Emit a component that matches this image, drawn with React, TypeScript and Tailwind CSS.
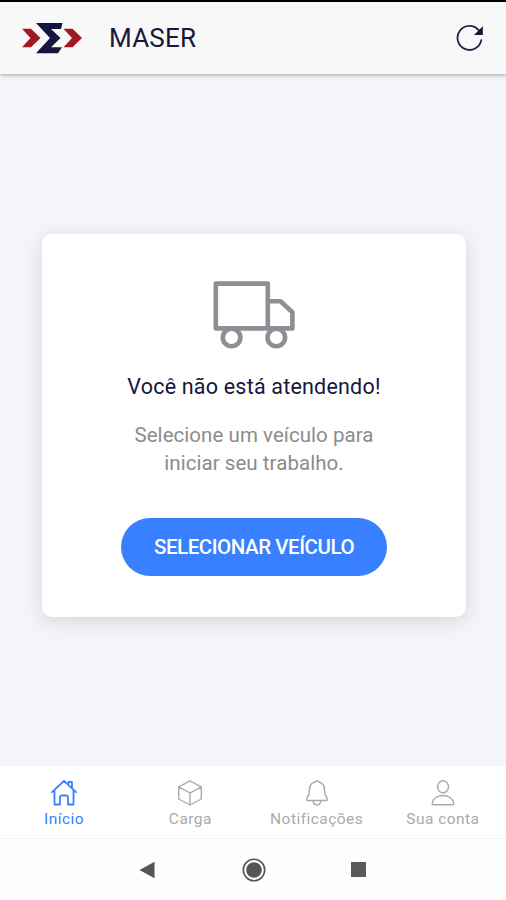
import type { ReactNode } from "react";

function Logo() {
  return (
    <svg width="62" height="32" viewBox="0 0 62 32">
      <path d="M1 6.8h9L19.5 16 10 25.200H1L9.500 16z" fill="#a01a22" />
      <path d="M15 1h26.500l-1.500 6H30l9.500 9-9.500 9.200H41L37 31.300H15L29 16z" fill="#14163f" />
      <path d="M42.500 6.800h9L61 16l-9.500 9.200h-9L51 16z" fill="#a01a22" />
    </svg>
  );
}

function Refresh() {
  return (
    <svg width="28" height="28" viewBox="0 0 28 28" fill="none">
      <path d="M25.300 16.200A12 12 0 1 1 22.600 6.100" stroke="#22243f" strokeWidth="1.800" strokeLinecap="round" />
      <path d="M26.800 2.200v8.800H18z" fill="#14143c" />
    </svg>
  );
}

function Truck() {
  return (
    <svg width="84" height="70" viewBox="0 0 84 70" fill="none" stroke="#8c8f93" strokeWidth="4.6" strokeLinejoin="round">
      <path d="M3.800 3.600h52v44.800h-52zM55.800 21.300h12.700l11.900 10.900v16.200H55.800" />
      <circle cx="19.600" cy="57.500" r="8.800" fill="#fff" />
      <circle cx="64.300" cy="57.500" r="8.800" fill="#fff" />
    </svg>
  );
}

type TabProps = {
  label: string;
  active?: boolean;
  children: ReactNode;
};

function Tab({ label, active, children }: TabProps) {
  return (
    <button
      className={`flex flex-1 flex-col items-center pt-[13px] ${
        active ? "text-[#3880ff]" : "text-[#aaaaaa]"
      }`}
    >
      <svg
        width="28"
        height="28"
        viewBox="0 0 28 28"
        fill="none"
        stroke="currentColor"
        strokeWidth={active ? 1.8 : 1.4}
        strokeLinecap="round"
        strokeLinejoin="round"
      >
        {children}
      </svg>
      <span className="mt-[2px] text-[15.5px] leading-5 tracking-[0.45px] whitespace-nowrap">{label}</span>
    </button>
  );
}

export default function App() {
  return (
    <div className="flex h-[900px] w-[506px] flex-col overflow-hidden bg-[#f3f5fa] font-[Roboto,sans-serif]">
      <div className="h-[2px] shrink-0 bg-black" />

      {/* Header */}
      <header className="z-10 flex h-[72px] shrink-0 items-center bg-[#f8f8f8] pr-[22px] pl-[21px] shadow-[0_1px_4px_rgba(0,0,0,0.35)]">
        <Logo />
        <h1 className="ml-[26px] flex-1 pt-px text-[26px] tracking-[0.2px] text-[#17173c]">MASER</h1>
        <button>
          <Refresh />
        </button>
      </header>

      {/* Content */}
      <main className="flex flex-1 flex-col items-center pt-[160px] pr-[40px] pl-[42px]">
        <section className="flex h-[383px] w-full flex-col items-center rounded-[10px] bg-white pt-[46px] text-center shadow-[0_4px_20px_rgba(0,0,0,0.13)]">
          <Truck />
          <h2 className="mt-[23px] text-[21.5px] leading-7 tracking-[0.2px] text-[#17173c]">
            Você não está atendendo!
          </h2>
          <p className="mt-[20px] text-[20.5px] leading-7 tracking-[0.05px] text-[#8c8c8c]">
            Selecione um veículo para
            <br />
            iniciar seu trabalho.
          </p>
          <button className="mt-[41px] h-[58px] w-[266px] rounded-full bg-[#3880ff] text-[20.5px] font-medium tracking-[-0.45px] text-white">
            SELECIONAR VEÍCULO
          </button>
        </section>
      </main>

      {/* Tab bar */}
      <nav className="flex h-[73px] shrink-0 border-b border-[#f3f3f3] bg-white pl-px">
        <Tab label="Início" active>
          <path d="M2 13.200 14 1.800l12 11.400M4.500 11v14.500H10v-7a2 2 0 0 1 2-2h4a2 2 0 0 1 2 2v7h5.500V11M18.500 6V3h3.500v6" />
        </Tab>
        <Tab label="Carga">
          <path d="M14 1.800 25.300 7.800v12.200L14 26 2.700 20V7.800zM2.700 7.800 14 14l11.300-6.200M14 14v12" />
        </Tab>
        <Tab label="Notificações">
          <path d="M14 1.800c-1 0-1.400.6-1.800 1.200-4 .8-5.700 4-5.700 8 0 5.500-1.500 6.800-2.700 8.500-.7 1 0 2 1.100 2h18.200c1.100 0 1.800-1 1.100-2-1.200-1.700-2.700-3-2.700-8.500 0-4-1.700-7.200-5.700-8-.4-.6-.8-1.200-1.800-1.200zM10.300 21.500c0 2.700 1.600 4.500 3.700 4.500s3.700-1.800 3.700-4.500" />
        </Tab>
        <Tab label="Sua conta">
          <ellipse cx="14" cy="7.700" rx="5.500" ry="6" />
          <path d="M14 16.500c-5.300 0-10 2.900-10.800 7.600-.1.900.3 1.700 1.200 1.700h19.200c.9 0 1.300-.8 1.200-1.700C24 19.400 19.300 16.500 14 16.500z" />
        </Tab>
      </nav>

      {/* System navigation */}
      <div className="flex h-[61px] shrink-0 items-center bg-[#fefefe] pl-[139px]">
        <svg width="16" height="18" viewBox="0 0 16 18">
          <path d="M.5 9 15.500.8v16.400z" fill="#555" />
        </svg>
        <svg className="ml-[87px]" width="24" height="24" viewBox="0 0 24 24">
          <circle cx="12" cy="12" r="10.700" fill="none" stroke="#555" strokeWidth="1.600" />
          <circle cx="12" cy="12" r="7.800" fill="#555" />
        </svg>
        <div className="ml-[85px] size-[15px] bg-[#5a5a5a]" />
      </div>
    </div>
  );
}
